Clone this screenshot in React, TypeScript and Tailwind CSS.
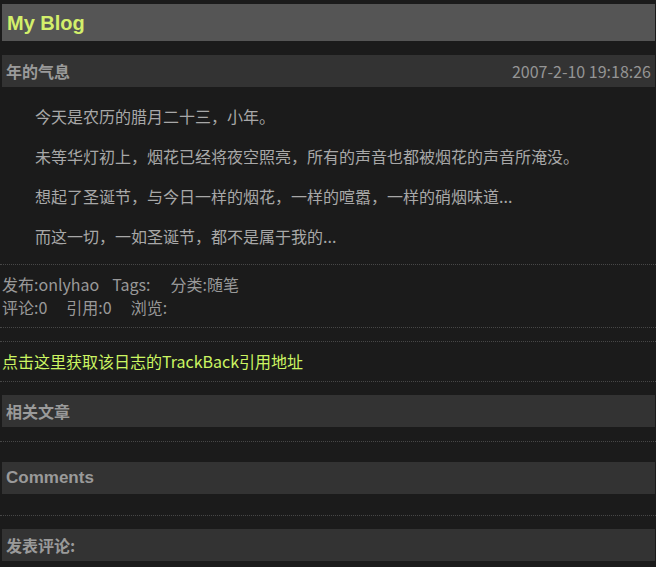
import type { FC } from "react";

const cjk = "font-['Noto_Sans_CJK_SC','Noto_Sans',sans-serif]";
const latinBold = "font-['Liberation_Sans','Noto_Sans_CJK_SC',sans-serif]";

const paragraphs = [
  "今天是农历的腊月二十三，小年。",
  "未等华灯初上，烟花已经将夜空照亮，所有的声音也都被烟花的声音所淹没。",
  "想起了圣诞节，与今日一样的烟花，一样的喧嚣，一样的硝烟味道...",
  "而这一切，一如圣诞节，都不是属于我的...",
];

const Bar: FC<{ title: string; latin?: boolean; right?: string }> = ({ title, latin, right }) => (
  <div className="ml-[2px] mr-[1px] flex h-[32px] items-center justify-between bg-[#333333] px-[4px]">
    <span
      className={`${latin ? latinBold + " text-[17px]" : cjk + " text-[16px]"} font-bold text-[#9a9a9a]`}
    >
      {title}
    </span>
    {right && <span className={`${cjk} text-[16px] text-[#959595]`}>{right}</span>}
  </div>
);

const Dotted: FC = () => <div className="border-b border-dotted border-[#474747]" />;

const App: FC = () => {
  return (
    <div className={`min-h-[567px] bg-[#1b1b1b] pt-[4px] ${cjk}`}>
      {/* header */}
      <div className="ml-[2px] mr-[1px] flex h-[37px] items-center bg-[#555555] px-[5px]">
        <h1 className={`${latinBold} text-[20px] font-bold text-[#d3ef6b]`}>My Blog</h1>
      </div>

      {/* post */}
      <div className="mt-[14px]">
        <Bar title="年的气息" right="2007-2-10 19:18:26" />
        <div className="pl-[35px] pt-[17px]">
          {paragraphs.map((p) => (
            <p key={p} className="mb-[15px] text-[16px] leading-[25px] text-[#a8a8a8]">
              {p}
            </p>
          ))}
        </div>
        <Dotted />
        <div className="px-[2px] pt-[8px] pb-[8px] text-[16px] leading-[23px] text-[#999999]">
          <div className="flex">
            <span>发布:onlyhao</span>
            <span className="ml-[13px]">Tags:</span>
            <span className="ml-[20px]">分类:随笔</span>
          </div>
          <div className="flex">
            <span>评论:0</span>
            <span className="ml-[19px]">引用:0</span>
            <span className="ml-[19px]">浏览:</span>
          </div>
        </div>
        <Dotted />
        <div className="mt-[13px]">
          <Dotted />
        </div>
        <div className="px-[2px] pt-[8px] pb-[8px] text-[16px] leading-[23px] text-[#ccf562]">
          点击这里获取该日志的TrackBack引用地址
        </div>
        <Dotted />
      </div>

      {/* related */}
      <div className="mt-[13px]">
        <Bar title="相关文章" />
        <div className="mt-[14px]">
          <Dotted />
        </div>
      </div>

      {/* comments */}
      <div className="mt-[20px]">
        <Bar title="Comments" latin />
        <div className="mt-[21px]">
          <Dotted />
        </div>
      </div>

      {/* form */}
      <div className="mt-[13px]">
        <Bar title="发表评论:" />
      </div>
    </div>
  );
};

export default App;
